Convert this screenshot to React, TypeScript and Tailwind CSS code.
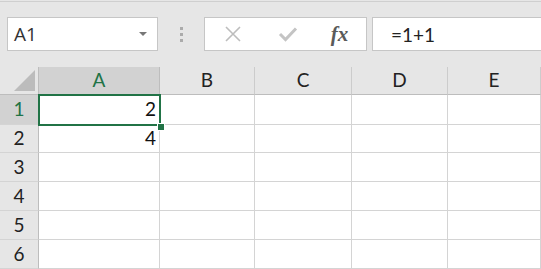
import React from "react";

const cols = ["A", "B", "C", "D", "E"];
const rows = [1, 2, 3, 4, 5, 6];
const data: Record<string, string> = { A1: "2", A2: "4" };

export default function App() {
  return (
    <div className="w-[541px] h-[269px] overflow-hidden bg-[#e6e6e6] relative" style={{ fontFamily: "Lato, 'Open Sans', sans-serif" }}>
      <div className="h-[2px] border-b border-[#cfcfcf]" />
      {/* toolbar */}
      <div className="h-[65px] flex items-center pb-[1px]">
        <div className="ml-[7px] w-[151px] h-[34px] bg-white border border-[#c6c6c6] flex items-center pl-[6px] pr-[10px] relative">
          <span className="text-[19px] text-[#333] leading-none" style={{ fontFamily: "'Open Sans', sans-serif" }}>A1</span>
          <span className="ml-auto w-0 h-0 border-l-[4px] border-r-[4px] border-t-[4px] border-l-transparent border-r-transparent border-t-[#777]" />
        </div>
        <div className="w-[46px] flex flex-col items-center gap-[3px]">
          <span className="w-[3px] h-[3px] bg-[#ababab]" />
          <span className="w-[3px] h-[3px] bg-[#ababab]" />
          <span className="w-[3px] h-[3px] bg-[#ababab]" />
        </div>
        <div className="w-[163px] h-[34px] bg-white border border-[#c6c6c6] flex items-center">
          <div className="w-[56px] flex justify-center">
            <svg width="18" height="18" viewBox="0 0 18 18">
              <path d="M2 2 L16 16 M16 2 L2 16" stroke="#bdbdbd" strokeWidth="1.6" fill="none" />
            </svg>
          </div>
          <div className="w-[54px] flex justify-center">
            <svg width="20" height="16" viewBox="0 0 20 16">
              <path d="M2 8 L7.5 13.5 L18 2.5" stroke="#c4c4c4" strokeWidth="3" fill="none" />
            </svg>
          </div>
          <div className="flex-1 flex justify-center pr-[2px]">
            <span className="italic font-bold text-[21px] text-[#5a5a5a] leading-none" style={{ fontFamily: "'Liberation Serif', serif" }}>fx</span>
          </div>
        </div>
        <div className="ml-[5px] flex-1 h-[34px] bg-white border border-[#c6c6c6] -mr-[4px] flex items-center pl-[18px]">
          <span className="text-[19px] text-[#222] leading-none">=1+1</span>
        </div>
      </div>
      {/* grid */}
      <div className="grid grid-cols-[39px_121px_95px_97px_96px_1fr] grid-rows-[28px_30px_28px_29px_29px_29px_29px] relative">
        <div className="bg-[#e6e6e6] border-r border-b border-[#bdbdbd] relative">
          <svg className="absolute right-[3px] bottom-[3px]" width="21" height="21" viewBox="0 0 21 21">
            <path d="M21 0 L21 21 L0 21 Z" fill="#bcbcbc" />
          </svg>
        </div>
        {cols.map((c) => (
          <div
            key={c}
            className={
              "flex items-center justify-center text-[19px] border-b border-[#bdbdbd] " +
              (c === "A"
                ? "bg-[#d2d2d2] text-[#217346] border-r border-r-[#bdbdbd]"
                : "bg-[#e6e6e6] text-[#222] border-r border-r-[#cccccc]")
            }
          >
            {c}
          </div>
        ))}
        {rows.map((r) => (
          <React.Fragment key={r}>
            <div
              className={
                "flex items-center justify-center text-[19px] border-r border-[#bdbdbd] border-b border-b-[#d4d4d4] " +
                (r === 1 ? "bg-[#d2d2d2] text-[#217346]" : "bg-[#e6e6e6] text-[#222]")
              }
            >
              {r}
            </div>
            {cols.map((c) => (
              <div
                key={c}
                className="bg-white border-r border-b border-[#d4d4d4] flex items-center justify-end pr-[3px] text-[19px] text-[#111]"
              >
                {data[c + r] ?? ""}
              </div>
            ))}
          </React.Fragment>
        ))}
        {/* selection */}
        <div className="absolute left-[38px] top-[27px] w-[123px] h-[32px] border-2 border-[#217346] pointer-events-none" />
        <div className="absolute left-[157px] top-[56px] w-[6px] h-[6px] bg-[#217346] border border-white box-content" />
      </div>
    </div>
  );
}
